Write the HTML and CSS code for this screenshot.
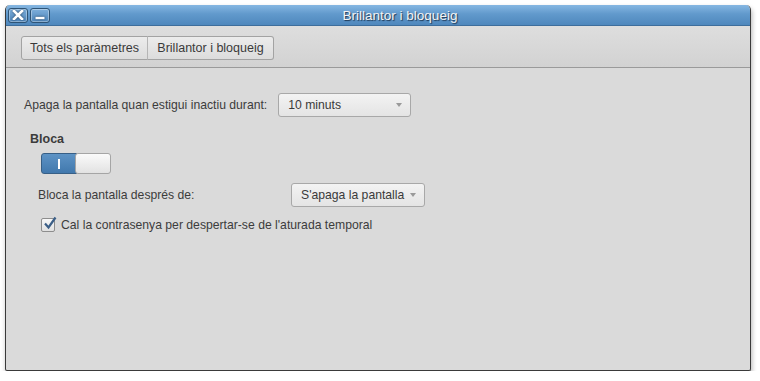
FILE: index.html
```html
<!DOCTYPE html>
<html>
<head>
    <link rel="stylesheet" href="styles.css">
</head>
<body>
    <div class="window">
        <div class="titlebar">
            <div class="wm-buttons">
                <div class="wm-btn">
                    <svg width="12" height="10" viewBox="0 0 12 10"><path d="M2 1 L10 9 M10 1 L2 9" stroke="#fff" stroke-width="2.6" stroke-linecap="square"/></svg>
                </div>
                <div class="wm-btn">
                    <svg width="12" height="10" viewBox="0 0 12 10"><path d="M1.5 8 H10.5" stroke="#fff" stroke-width="2.4"/></svg>
                </div>
            </div>
            <div class="wm-title">Brillantor i bloqueig</div>
        </div>

        <div class="toolbar">
            <div class="crumbs">
                <div class="crumb">Tots els paràmetres</div>
                <div class="crumb">Brillantor i bloqueig</div>
            </div>
        </div>

        <div class="content">
            <div class="row row-screen">
                <span class="label">Apaga la pantalla quan estigui inactiu durant:</span>
                <div class="combo combo-wide">
                    <span>10 minuts</span>
                    <span class="arrow"></span>
                </div>
            </div>

            <div class="section-title">Bloca</div>

            <div class="switch">
                <div class="switch-on"><span class="switch-bar"></span></div>
                <div class="switch-knob"></div>
            </div>

            <div class="row row-lock">
                <span class="label lock-label">Bloca la pantalla després de:</span>
                <div class="combo">
                    <span>S'apaga la pantalla</span>
                    <span class="arrow"></span>
                </div>
            </div>

            <div class="check-row">
                <span class="check">
                    <svg width="15" height="15" viewBox="0 0 15 15"><path d="M3 7.5 L6.5 11.5 L13.5 1.5" fill="none" stroke="#3c5f87" stroke-width="2.2"/></svg>
                </span>
                <span class="label">Cal la contrasenya per despertar-se de l'aturada temporal</span>
            </div>
        </div>
    </div>
</body>
</html>
```

FILE: styles.css
```css
body {
    margin: 0;
    padding: 5px 0 0 5px;
    background: #ffffff;
    font-family: 'Liberation Sans', 'DejaVu Sans', sans-serif;
    font-size: 12px;
    color: #3c3c3c;
}
.window {
    width: 746px;
    height: 366px;
    display: flex;
    flex-direction: column;
    background: #dadada;
    border: 1px solid #3a3a3a;
    border-top: none;
    border-radius: 5px 5px 2px 2px;
    box-sizing: border-box;
    box-shadow: 1px 3px 5px rgba(0,0,0,0.3);
    overflow: hidden;
}
.titlebar {
    height: 21px;
    flex: none;
    display: flex;
    align-items: center;
    position: relative;
    background: linear-gradient(#86b7e2, #6199cc 45%, #4f88bd);
    border-bottom: 1px solid #3e6e9c;
    box-sizing: border-box;
}
.wm-buttons {
    display: flex;
    gap: 2px;
    padding-left: 2px;
}
.wm-btn {
    width: 20px;
    height: 15px;
    box-sizing: border-box;
    border: 1px solid #2e5476;
    border-radius: 3px;
    background: linear-gradient(#7fb0dc, #4c83b8);
    box-shadow: inset 0 0 0 1px rgba(255,255,255,0.35);
    display: flex;
    align-items: center;
    justify-content: center;
}
.wm-btn svg {
    filter: drop-shadow(0 0 1px #1f3c5a);
}
.wm-title {
    position: absolute;
    left: 44px;
    right: 0;
    text-align: center;
    color: #f4f4f4;
    font-size: 13.5px;
    text-shadow: 1px 1px 1px #1d3550;
}
.toolbar {
    height: 42px;
    flex: none;
    background: linear-gradient(#dedede, #d2d2d2);
    border-bottom: 1px solid #9a9a9a;
    box-sizing: border-box;
    padding: 10px 0 0 15px;
}
.crumbs {
    display: flex;
    height: 24px;
}
.crumb {
    display: flex;
    align-items: center;
    justify-content: center;
    white-space: nowrap;
    font-size: 12.5px;
    color: #3a3a3a;
    border: 1px solid #a3a3a3;
    background: linear-gradient(#ececec, #dcdcdc);
    box-sizing: border-box;
}
.crumb:first-child {
    border-radius: 3px 0 0 3px;
    width: 127px;
}
.crumb + .crumb {
    border-left: 1px solid #b5b5b5;
    border-radius: 0 3px 3px 0;
    width: 127px;
    margin-left: -1px;
}
.content {
    flex: 1;
    padding: 25px 0 0 18px;
}
.row {
    display: flex;
    align-items: center;
}
.label {
    font-size: 12.2px;
    color: #3c3c3c;
    white-space: nowrap;
}
.combo {
    height: 24px;
    box-sizing: border-box;
    border: 1px solid #a8a8a8;
    border-radius: 3px;
    background: linear-gradient(#f3f3f3, #e4e4e4);
    display: flex;
    align-items: center;
    justify-content: space-between;
    padding: 0 8px 0 9px;
    font-size: 12.2px;
    color: #3a3a3a;
}
.combo-wide {
    width: 133px;
    margin-left: 11px;
}
.lock-label {
    width: 253px;
}
.row-lock .combo {
    width: 134px;
}
.arrow {
    width: 0;
    height: 0;
    border-left: 3px solid transparent;
    border-right: 3px solid transparent;
    border-top: 4px solid #9a9a9a;
}
.section-title {
    font-weight: bold;
    font-size: 12.5px;
    color: #3c3c3c;
    margin: 15px 0 0 6px;
}
.switch {
    display: flex;
    width: 70px;
    height: 21px;
    margin: 7px 0 0 17px;
}
.switch-on {
    width: 36px;
    background: linear-gradient(#5d93c5, #4178ad);
    border: 1px solid #375f86;
    border-radius: 3px 0 0 3px;
    box-sizing: border-box;
    display: flex;
    align-items: center;
    justify-content: center;
}
.switch-bar {
    width: 2px;
    height: 10px;
    background: #ffffff;
}
.switch-knob {
    flex: 1;
    margin-left: -2px;
    border: 1px solid #a5a5a5;
    border-radius: 3px;
    background: linear-gradient(#fafafa, #e2e2e2);
    box-sizing: border-box;
}
.row-lock {
    margin: 9px 0 0 14px;
}
.check-row {
    display: flex;
    align-items: center;
    margin: 11px 0 0 17px;
    gap: 6px;
}
.check {
    width: 14px;
    height: 14px;
    box-sizing: border-box;
    border: 1px solid #8d8d8d;
    border-radius: 2px;
    background: linear-gradient(#f8f8f8, #e0e0e0);
    position: relative;
}
.check svg {
    position: absolute;
    left: 0;
    top: -3px;
}
```
